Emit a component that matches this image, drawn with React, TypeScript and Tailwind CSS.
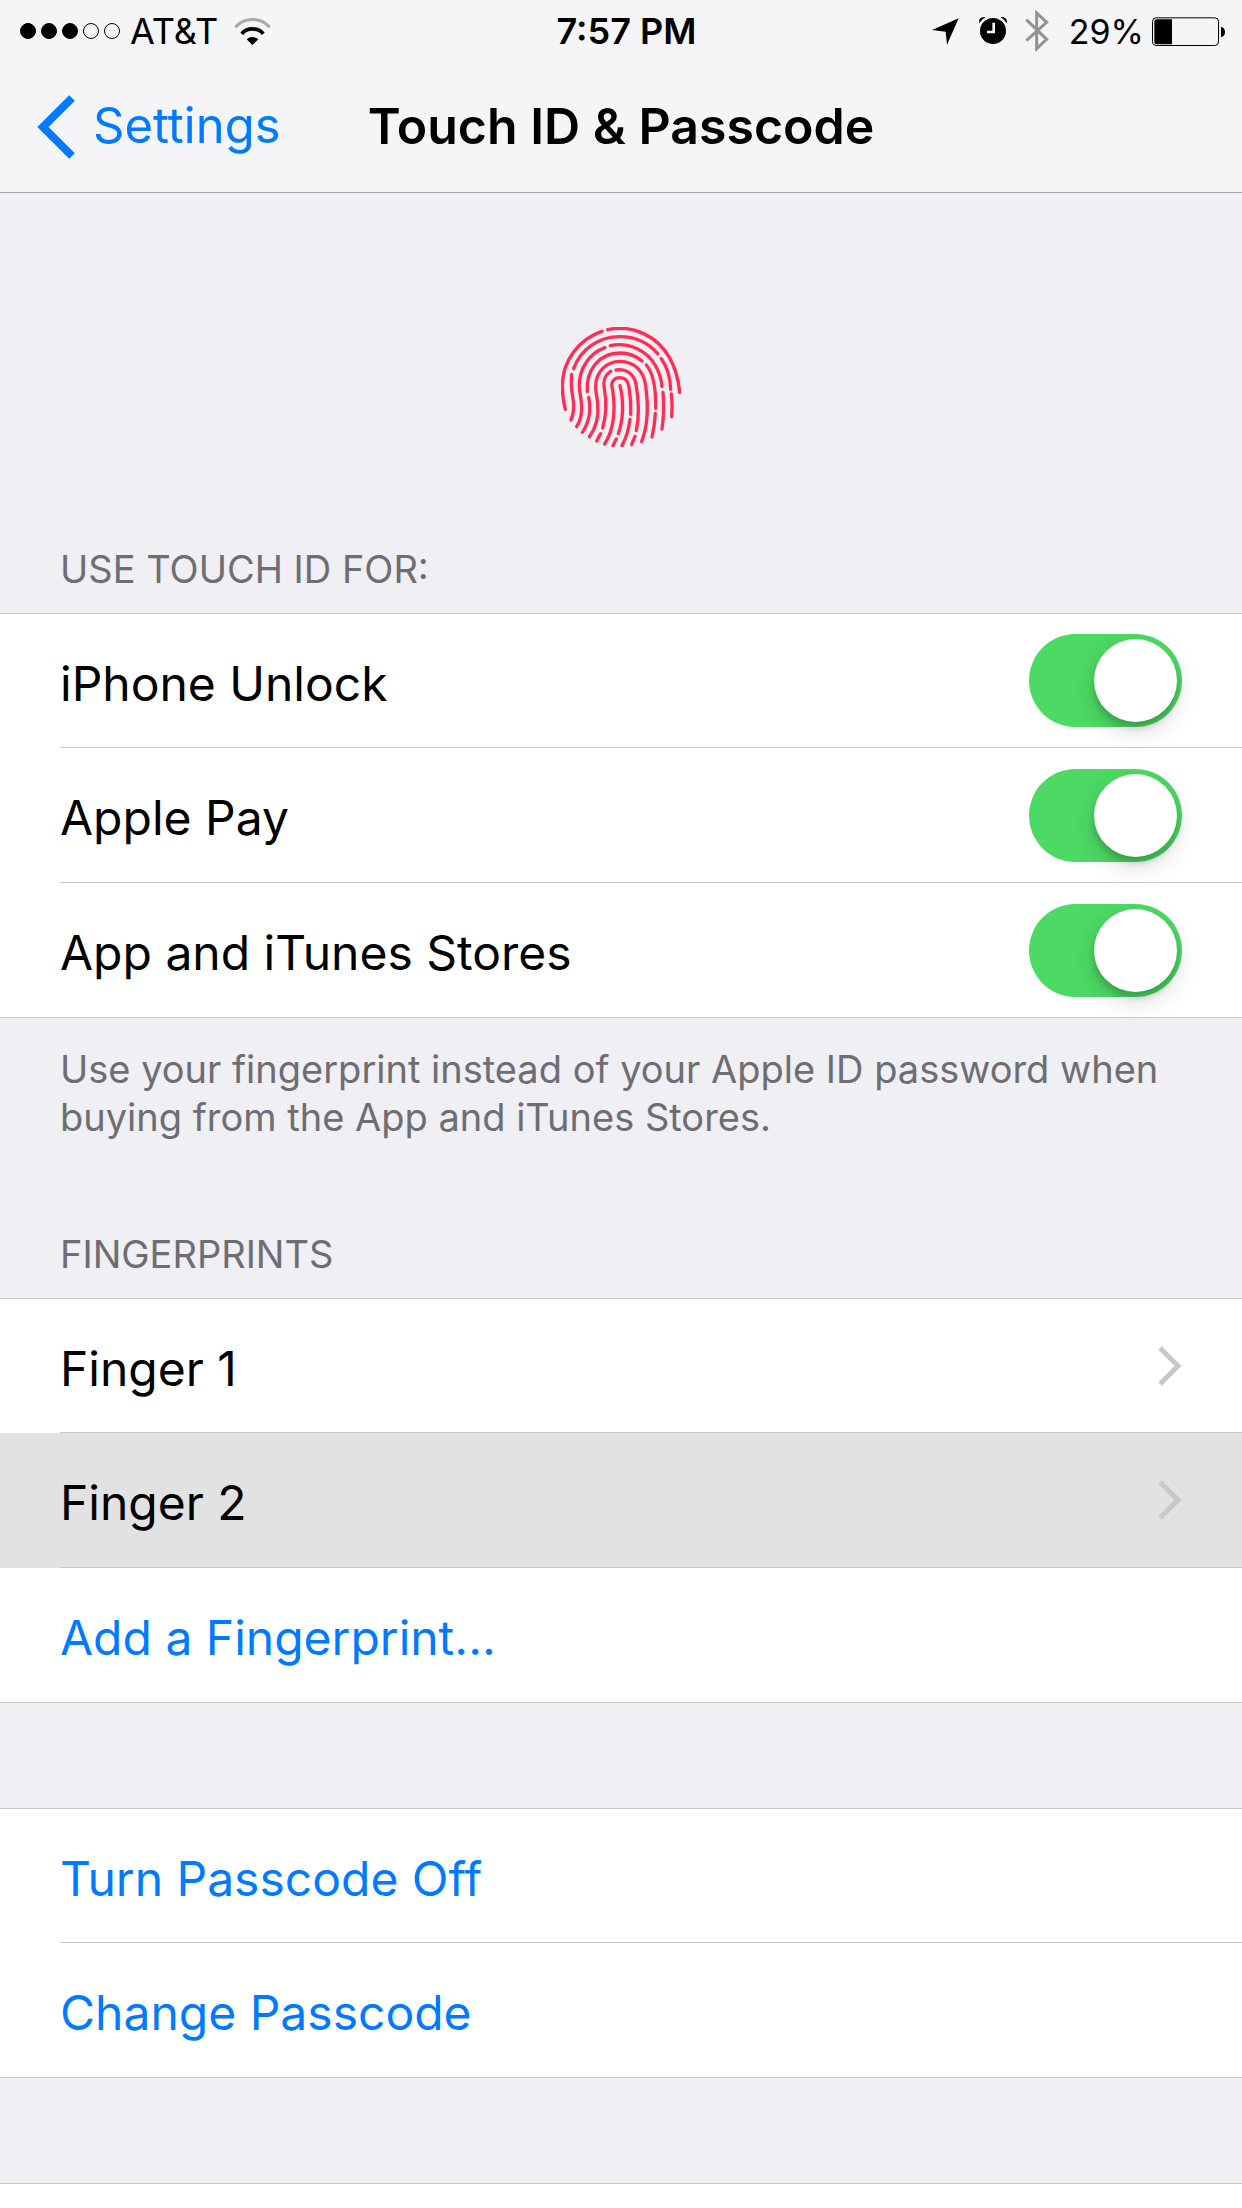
import { useState } from 'react';
import type { ReactNode } from 'react';
import clsx from 'clsx';

type SwitchItem = {
  id: string;
  label: string;
};

const touchIdOptions: SwitchItem[] = [
  { id: 'iphone-unlock', label: 'iPhone Unlock' },
  { id: 'apple-pay', label: 'Apple Pay' },
  { id: 'stores', label: 'App and iTunes Stores' },
];

const fingers = ['Finger 1', 'Finger 2'];

function WifiIcon() {
  return (
    <svg viewBox="702 47 111 81" className="h-[27px] w-[37px]" fill="none" aria-hidden="true">
      <path d="M706 75A68 68 0 0 1 809 75" stroke="#a9a9ab" strokeWidth="9" />
      <path d="M725 94A44 44 0 0 1 790 94" stroke="#000" strokeWidth="11" />
      <path d="M757 128L740 111A26 26 0 0 1 775 111Z" fill="#000" />
    </svg>
  );
}

function LocationIcon() {
  return (
    <svg viewBox="100 53 81 81" className="size-[27px]" aria-hidden="true">
      <path d="M180 54L145 133L141 94L100 89Z" />
    </svg>
  );
}

function AlarmIcon() {
  return (
    <svg viewBox="240 50 84 84" className="size-[28px]" fill="none" aria-hidden="true">
      <circle cx="282" cy="92" r="39" fill="#000" />
      <path d="M284 67V95H264" stroke="#f5f5f7" strokeWidth="8" />
      <path d="M241 67Q239 51 258 51Q247 56 241 67Z" fill="#000" stroke="#000" strokeWidth="2" />
      <path d="M323 67Q325 51 306 51Q317 56 323 67Z" fill="#000" stroke="#000" strokeWidth="2" />
    </svg>
  );
}

function BluetoothIcon() {
  return (
    <svg viewBox="377 29 72 126" className="h-[42px] w-[24px]" fill="none" aria-hidden="true">
      <path d="M381 58L442 117L412 145V38L442 66L381 121" stroke="#929294" strokeWidth="9" />
    </svg>
  );
}

function BatteryIcon() {
  return (
    <svg viewBox="756 47 219 87" className="h-[29px] w-[73px]" fill="none" aria-hidden="true">
      <rect x="757.5" y="49.5" width="198" height="83" rx="11" stroke="#000" strokeWidth="3" />
      <path d="M816 54V129H770Q763 129 763 122V61Q763 54 770 54Z" fill="#000" />
      <path d="M963 76Q975 79 975 92Q975 105 963 108Z" fill="#000" />
    </svg>
  );
}

function FingerprintIcon() {
  return (
    <svg
      viewBox="63 51 360 360"
      className="size-[120px]"
      fill="none"
      stroke="#ff2d55"
      strokeWidth="10"
      strokeLinecap="round"
      aria-hidden="true"
    >
      <path d="M76 298Q67 262 67 228A174 174 0 0 1 186 64" />
      <path d="M203 59C280 42 352 80 388 142C408 177 416 212 419 248" />
      <path d="M101 176C122 118 175 80 240 80C285 80 325 99 353 131" />
      <path d="M364 146Q390 182 392 238" />
      <path d="M95 193Q92 228 98 258Q106 302 93 330" />
      <path d="M394 252Q398 288 395 320" />
      <path d="M195 113C148 130 118 175 118 225C118 250 126 270 125 300C124 320 120 334 110 350" />
      <path d="M211 107C265 95 322 122 347 168C358 188 364 208 366 230" />
      <path d="M369 247Q374 302 366 357" />
      <path d="M142 245C137 182 176 129 240 129C266 129 288 138 306 153" />
      <path d="M319 165C342 192 348 240 347 295" />
      <path d="M346 310Q344 346 336 381" />
      <path d="M146 262Q158 322 127 367" />
      <path d="M148 381C169 352 177 318 173 280C172 262 167 250 167 230C167 185 200 154 240 154C285 154 312 186 317 228C326 290 322 350 305 395" />
      <path d="M212 184C195 195 188 215 193 235C200 275 198 320 188 354" />
      <path d="M182 371L170 393" />
      <path d="M228 180C256 175 282 190 288 222C298 280 298 320 289 362" />
      <path d="M285 379L275 404" />
      <path d="M194 402C224 355 226 295 218 240C209 213 225 203 240 203C256 203 264 212 267 232C272 262 273 290 272 313" />
      <path d="M270 328C266 360 258 385 246 407" />
      <path d="M240 227C252 275 250 330 235 371" />
      <path d="M229 387L219 407" />
    </svg>
  );
}

function Disclosure() {
  return (
    <svg viewBox="0 0 24 40" className="h-10 w-6" fill="none" stroke="#c7c7cc" strokeWidth="5" aria-hidden="true">
      <path d="M2 2L20 20L2 38" />
    </svg>
  );
}

function StatusBar() {
  return (
    <div className="grid h-[62px] grid-cols-[1fr_auto_1fr] items-center pr-[17px] pl-5 text-[36px]">
      <div className="flex items-center">
        <div className="flex gap-[5px]">
          {[1, 2, 3, 4, 5].map((dot) => (
            <span
              key={dot}
              className={clsx('size-4 rounded-full border border-black', dot <= 3 && 'bg-black')}
            />
          ))}
        </div>
        <span className="mr-4 ml-2.5">AT&amp;T</span>
        <WifiIcon />
      </div>
      <time className="pl-2 font-semibold">7:57 PM</time>
      <div className="flex items-center justify-end">
        <LocationIcon />
        <span className="ml-5">
          <AlarmIcon />
        </span>
        <span className="ml-[18px]">
          <BluetoothIcon />
        </span>
        <span className="mr-2 ml-5 text-[34px]">29%</span>
        <BatteryIcon />
      </div>
    </div>
  );
}

function NavBar() {
  return (
    <nav className="grid h-[130px] grid-cols-[1fr_auto_1fr] items-center pl-9">
      <a href="#settings" className="flex items-center gap-[18px] text-[49px] text-[#007aff]">
        <svg viewBox="0 0 39 64" className="h-16 w-[39px]" fill="none" stroke="currentColor" strokeWidth="8" aria-hidden="true">
          <path d="M36 3L7 32L36 61" />
        </svg>
        <span className="pb-0.5">Settings</span>
      </a>
      <h1 className="pr-9 pb-0.5 text-[50px] font-semibold">Touch ID &amp; Passcode</h1>
    </nav>
  );
}

function SectionTitle({ children }: { children: ReactNode }) {
  return <h2 className="px-[60px] pb-5 text-[38px] leading-12 text-[#6d6d72]">{children}</h2>;
}

function Group({ children }: { children: ReactNode }) {
  return <ul className="border-y border-[#c8c7cc] bg-white">{children}</ul>;
}

function Row({ children, selected = false }: { children: ReactNode; selected?: boolean }) {
  return (
    <li className={clsx('group pl-[60px]', selected && 'bg-[#e2e2e2]')}>
      <div className="flex h-[135px] items-center border-b border-[#c8c7cc] pr-[60px] text-[48px] group-first:h-[134px] group-last:h-[134px] group-last:border-b-0">
        {children}
      </div>
    </li>
  );
}

function SwitchRow({ id, label }: SwitchItem) {
  const [on, setOn] = useState(true);

  return (
    <Row>
      <label htmlFor={id} className="flex-1 pt-1.5">
        {label}
      </label>
      <input
        id={id}
        type="checkbox"
        role="switch"
        checked={on}
        onChange={() => setOn(!on)}
        className="h-[93px] w-[153px] appearance-none rounded-full bg-[#e5e5ea] p-[5px] before:block before:size-[83px] before:rounded-full before:bg-white before:shadow-[0_9px_24px_rgba(0,0,0,0.15),0_6px_6px_rgba(0,0,0,0.16)] checked:bg-[#4cd964] checked:before:ml-auto"
      />
    </Row>
  );
}

function ActionRow({ children }: { children: ReactNode }) {
  return (
    <Row>
      <button type="button" className="flex-1 pt-1.5 text-left text-[#007aff]">
        {children}
      </button>
    </Row>
  );
}

function App() {
  const [selected, setSelected] = useState('Finger 2');

  return (
    <div className="flex min-h-screen flex-col bg-[#efeff4] font-[Inter,sans-serif] text-black">
      <header className="border-b border-[#a7a7aa] bg-[#f5f5f7]">
        <StatusBar />
        <NavBar />
      </header>

      <main className="flex flex-1 flex-col">
        <div className="flex justify-center pt-[134px] pb-[98px]">
          <FingerprintIcon />
        </div>

        <section>
          <SectionTitle>USE TOUCH ID FOR:</SectionTitle>
          <Group>
            {touchIdOptions.map((option) => (
              <SwitchRow key={option.id} {...option} />
            ))}
          </Group>
          <p className="px-[60px] pt-[27px] text-[38px] leading-12 text-[#6d6d72]">
            Use your fingerprint instead of your Apple ID password when buying from the App and iTunes Stores.
          </p>
        </section>

        <section className="pt-[89px]">
          <SectionTitle>FINGERPRINTS</SectionTitle>
          <Group>
            {fingers.map((finger) => (
              <Row key={finger} selected={finger === selected}>
                <button
                  type="button"
                  onClick={() => setSelected(finger)}
                  className="flex flex-1 items-center justify-between text-left"
                >
                  <span className="pt-1.5">{finger}</span>
                  <Disclosure />
                </button>
              </Row>
            ))}
            <ActionRow>Add a Fingerprint...</ActionRow>
          </Group>
        </section>

        <section className="pt-[105px]">
          <Group>
            <ActionRow>Turn Passcode Off</ActionRow>
            <ActionRow>Change Passcode</ActionRow>
          </Group>
        </section>

        <section className="mt-[105px] flex-1 border-t border-[#c8c7cc] bg-white" />
      </main>
    </div>
  );
}

export default App;
